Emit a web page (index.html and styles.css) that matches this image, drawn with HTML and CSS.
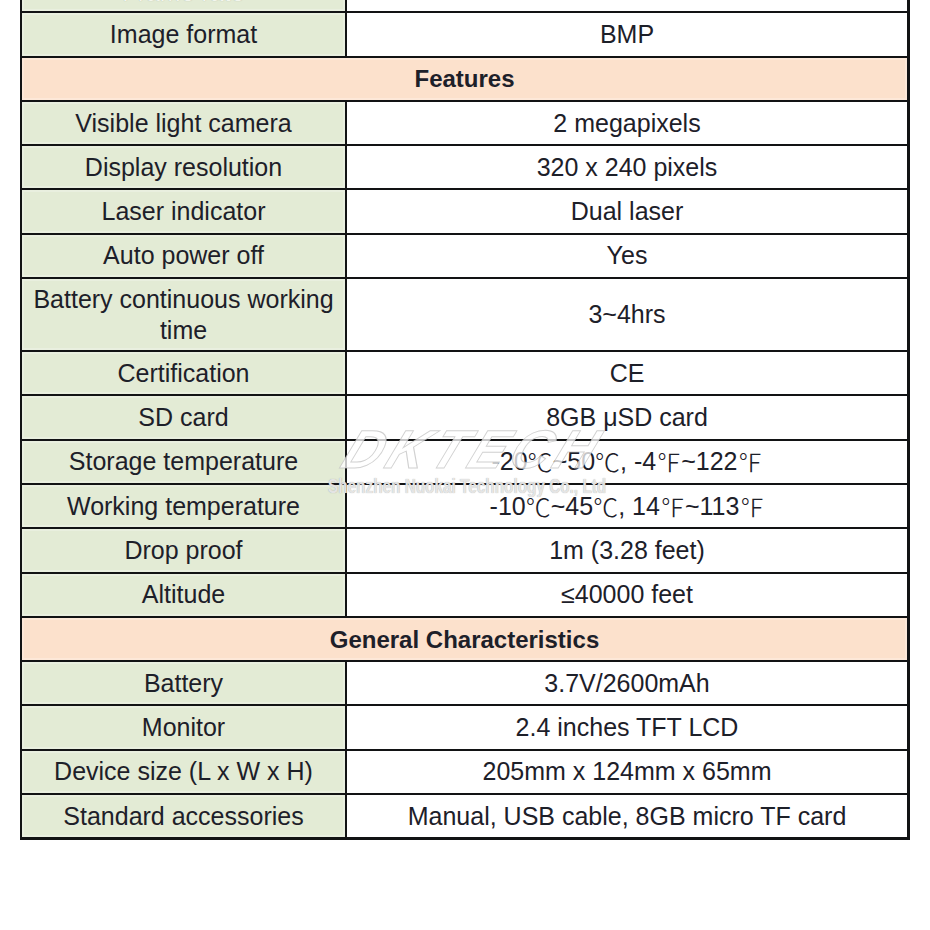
FILE: index.html
```html
<!DOCTYPE html>
<html>
<head>
<meta charset="utf-8">
<link rel="stylesheet" href="styles.css">
</head>
<body>
<div class="page">
  <div class="sheet">
    <div class="spec">
      <div class="cell key faded">Frame rate</div>
      <div class="cell val"></div>

      <div class="cell key">Image format</div>
      <div class="cell val">BMP</div>

      <div class="cell head">Features</div>

      <div class="cell key">Visible light camera</div>
      <div class="cell val">2 megapixels</div>

      <div class="cell key">Display resolution</div>
      <div class="cell val">320 x 240 pixels</div>

      <div class="cell key">Laser indicator</div>
      <div class="cell val">Dual laser</div>

      <div class="cell key">Auto power off</div>
      <div class="cell val">Yes</div>

      <div class="cell key wrap">Battery continuous working time</div>
      <div class="cell val">3~4hrs</div>

      <div class="cell key">Certification</div>
      <div class="cell val">CE</div>

      <div class="cell key">SD card</div>
      <div class="cell val">8GB μSD card</div>

      <div class="cell key">Storage temperature</div>
      <div class="cell val">-20<span class="cjk">℃</span>~50<span class="cjk">℃</span>, -4<span class="cjk">℉</span>~122<span class="cjk">℉</span></div>

      <div class="cell key">Working temperature</div>
      <div class="cell val">-10<span class="cjk">℃</span>~45<span class="cjk">℃</span>, 14<span class="cjk">℉</span>~113<span class="cjk">℉</span></div>

      <div class="cell key">Drop proof</div>
      <div class="cell val">1m (3.28 feet)</div>

      <div class="cell key">Altitude</div>
      <div class="cell val">≤40000 feet</div>

      <div class="cell head">General Characteristics</div>

      <div class="cell key">Battery</div>
      <div class="cell val">3.7V/2600mAh</div>

      <div class="cell key">Monitor</div>
      <div class="cell val">2.4 inches TFT LCD</div>

      <div class="cell key">Device size (L x W x H)</div>
      <div class="cell val">205mm x 124mm x 65mm</div>

      <div class="cell key">Standard accessories</div>
      <div class="cell val">Manual, USB cable, 8GB micro TF card</div>
    </div>

    <div class="watermark">
      <div class="wm-logo">DKTECH</div>
      <div class="wm-sub">Shenzhen Nuokai Technology Co., Ltd</div>
    </div>
  </div>
</div>
</body>
</html>
```

FILE: styles.css
```css
html, body {
  margin: 0;
  padding: 0;
  background: #ffffff;
}

body {
  width: 930px;
  height: 930px;
  overflow: hidden;
  font-family: "Liberation Sans", Arial, sans-serif;
}

.page {
  padding: 1px 0 0 20px;
}

.sheet {
  position: relative;
  width: 890px;
  margin-top: -32px;
}

.spec {
  display: grid;
  grid-template-columns: 323px 560px;
  grid-template-rows: repeat(7, 42.3px) 71px repeat(11, 42.3px);
  gap: 2px;
  padding: 0 3px 3px 2px;
  background: #121314;
}

.cell {
  display: flex;
  align-items: center;
  justify-content: center;
  text-align: center;
  font-size: 25px;
  line-height: 31px;
  color: #1d2029;
}

.cjk {
  font-family: "Noto Sans CJK SC", sans-serif;
  font-size: 25px;
  font-weight: 300;
}

.key {
  background: #e3ebd5;
  box-shadow: inset 0 0 0 2px #e9efdf;
}

.val {
  background: #ffffff;
}

.head {
  grid-column: 1 / -1;
  background: #fce1cc;
  box-shadow: inset 0 0 0 2px #fde8d8;
  font-weight: bold;
  font-size: 24px;
}

.wrap {
  padding: 0 6px;
}

.faded {
  color: #f3f6ee;
  text-shadow: 0 0 1px #a9b09e;
  align-items: flex-end;
  padding-bottom: 3px;
  box-sizing: border-box;
}

.watermark {
  position: absolute;
  left: 310px;
  top: 455px;
  width: 300px;
  pointer-events: none;
}

.wm-logo {
  font-family: "Liberation Sans", Arial, sans-serif;
  font-weight: bold;
  font-style: italic;
  font-size: 54px;
  line-height: 50px;
  letter-spacing: 5px;
  color: rgba(255, 255, 255, 0.75);
  -webkit-text-stroke: 1px rgba(190, 190, 190, 0.7);
  transform: skewX(-22deg);
  transform-origin: left bottom;
  padding-left: 6px;
}

.wm-sub {
  font-family: "Liberation Sans", Arial, sans-serif;
  font-weight: bold;
  font-size: 21px;
  line-height: 20px;
  white-space: nowrap;
  color: rgba(238, 238, 238, 0.9);
  text-shadow: 0 0 1px rgba(140, 140, 140, 0.8);
  transform: scaleX(0.73);
  transform-origin: left top;
  margin-top: 2px;
  margin-left: -2px;
}
```
